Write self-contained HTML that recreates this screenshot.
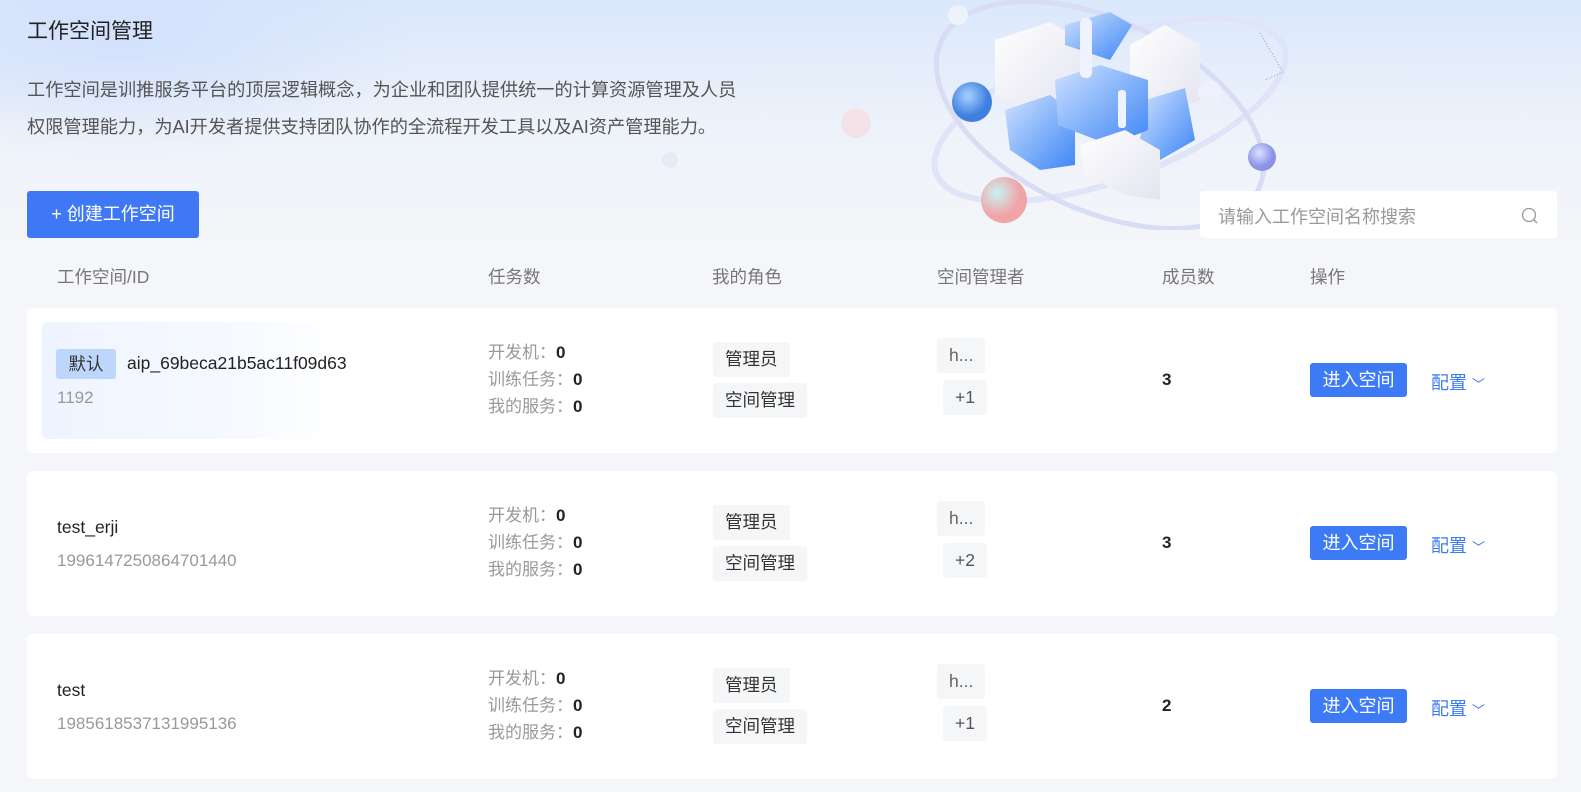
<!DOCTYPE html>
<html><head><meta charset="utf-8"><style>
*{margin:0;padding:0;box-sizing:border-box}
body{width:1581px;height:792px;overflow:hidden;background:#f5f6f9;font-family:"Liberation Sans","Noto Sans CJK SC",sans-serif;position:relative}
.bg{position:absolute;left:0;top:0;width:1581px;height:260px;background:linear-gradient(180deg,rgba(215,230,252,0.9) 0%,rgba(235,241,250,0.7) 50%,rgba(245,246,249,0) 100%)}
.bg2{position:absolute;left:0;top:0;width:1581px;height:260px;background:radial-gradient(ellipse 300px 120px at 120px 40px,rgba(205,220,252,0.7),rgba(255,255,255,0))}
.a{position:absolute;white-space:nowrap}
.card{position:absolute;left:27px;width:1530px;height:145px;background:#fff;border-radius:6px}
.hl{position:absolute;left:15px;top:14px;width:300px;height:117px;border-radius:6px;background:linear-gradient(90deg,#eef4ff,rgba(245,248,255,0.9) 60%,rgba(255,255,255,0))}
.tag{position:absolute;background:#f5f6f8;border-radius:3px;color:#333;font-size:17.5px;line-height:35px;padding:0 12px}
.t{position:absolute;font-size:17px;color:#999;line-height:27px}
.t b{color:#222}
.btn{position:absolute;left:1283px;width:97px;height:34px;background:#3d7af5;color:#fff;border-radius:3px;font-size:18px;text-align:center;line-height:34px}
.cfg{position:absolute;left:1404px;color:#3d7af5;font-size:18px}
.hd{position:absolute;top:264px;font-size:17.5px;color:#777}
</style></head><body>
<div class="bg"></div><div class="bg2"></div>
<svg class="a" style="left:900px;top:0" width="400" height="230" viewBox="900 0 400 230">
<defs>
<linearGradient id="bl" x1="0" y1="0" x2="1" y2="1"><stop offset="0" stop-color="#cfe2ff"/><stop offset="1" stop-color="#3e86f5"/></linearGradient>
<linearGradient id="wh" x1="0" y1="0" x2="1" y2="1"><stop offset="0" stop-color="#ffffff"/><stop offset="1" stop-color="#e3e4ef"/></linearGradient>
<radialGradient id="s1" cx="0.4" cy="0.35"><stop offset="0" stop-color="#a8d2ff"/><stop offset="1" stop-color="#3f7fe0"/></radialGradient>
<radialGradient id="s2" cx="0.35" cy="0.35"><stop offset="0" stop-color="#c9f3f3"/><stop offset="1" stop-color="#f1a4a8"/></radialGradient>
<radialGradient id="s3" cx="0.4" cy="0.35"><stop offset="0" stop-color="#dfe2ff"/><stop offset="1" stop-color="#8b93e6"/></radialGradient>
</defs>
<ellipse cx="1110" cy="110" rx="185" ry="70" transform="rotate(-20 1110 110)" fill="none" stroke="#e0e4f8" stroke-width="6"/>
<ellipse cx="1100" cy="115" rx="175" ry="95" transform="rotate(25 1100 115)" fill="none" stroke="#d8dcf5" stroke-width="5"/>
<polygon points="995,40 1050,22 1080,40 1080,95 1030,110 995,95" fill="url(#wh)"/>
<polygon points="1130,45 1165,25 1200,45 1200,100 1165,115 1130,95" fill="url(#wh)"/>
<polygon points="1005,110 1050,95 1075,115 1075,165 1040,170 1010,150" fill="url(#bl)"/>
<polygon points="1145,100 1185,88 1195,140 1160,160 1140,140" fill="url(#bl)"/>
<polygon points="1065,25 1110,12 1132,25 1110,60 1065,45" fill="url(#bl)"/>
<polygon points="1055,80 1100,65 1148,80 1148,130 1110,145 1058,125" fill="url(#bl)"/>
<polygon points="1080,145 1125,130 1160,150 1160,200 1125,195 1085,175" fill="url(#wh)"/>
<rect x="1080" y="18" width="12" height="60" rx="5" fill="#eef3ff"/>
<rect x="1118" y="90" width="8" height="38" rx="3" fill="#eef3ff"/>
<circle cx="972" cy="102" r="20" fill="url(#s1)"/>
<circle cx="1004" cy="200" r="23" fill="url(#s2)"/>
<circle cx="1262" cy="157" r="14" fill="url(#s3)"/>
<circle cx="1210" cy="92" r="12" fill="#eef0fb"/>
<circle cx="958" cy="15" r="10" fill="#eef2fb"/>
<polyline points="1260,33 1283,72 1265,80" fill="none" stroke="#99a" stroke-width="1" stroke-dasharray="1 2"/>
</svg>
<svg class="a" style="left:840px;top:105px" width="40" height="40"><circle cx="16" cy="18" r="15" fill="#f3e3e8"/></svg>
<svg class="a" style="left:660px;top:150px" width="20" height="20"><circle cx="10" cy="10" r="8" fill="#e6eaf5"/></svg>
<div class="a" style="left:27px;top:15px;font-size:21px;color:#222">工作空间管理</div>
<div class="a" style="left:27px;top:72px;font-size:18.2px;color:#555;line-height:37px">工作空间是训推服务平台的顶层逻辑概念，为企业和团队提供统一的计算资源管理及人员<br>权限管理能力，为AI开发者提供支持团队协作的全流程开发工具以及AI资产管理能力。</div>
<div class="a" style="left:27px;top:191px;width:172px;height:47px;background:#3f78f5;border-radius:3px;color:#fff;font-size:18px;line-height:47px;text-align:center">+ 创建工作空间</div>
<div class="a" style="left:1200px;top:191px;width:357px;height:47px;background:#fff;border-radius:4px">
<span class="a" style="left:18px;top:12px;font-size:18px;color:#999">请输入工作空间名称搜索</span>
<svg class="a" style="left:321px;top:16px" width="18" height="18"><circle cx="8" cy="8" r="6.5" fill="none" stroke="#999" stroke-width="1.3"/><line x1="12.5" y1="12.5" x2="16" y2="16" stroke="#999" stroke-width="1.3"/></svg>
</div>
<div class="hd" style="left:57px">工作空间/ID</div>
<div class="hd" style="left:488px">任务数</div>
<div class="hd" style="left:712px">我的角色</div>
<div class="hd" style="left:937px">空间管理者</div>
<div class="hd" style="left:1162px">成员数</div>
<div class="hd" style="left:1310px">操作</div>

<div class="card" style="top:308px"><div class="hl"></div>
<div class="a" style="left:29px;top:41px;width:60px;height:30px;background:#bdd6fb;border-radius:3px;font-size:17.5px;color:#333;text-align:center;line-height:30px">默认</div>
<div class="a" style="left:100px;top:45px;font-size:17.5px;color:#222">aip_69beca21b5ac11f09d63</div>
<div class="a" style="left:30px;top:80px;font-size:17px;color:#999">1192</div>
<div class="t" style="left:461px;top:31px">开发机：<b>0</b><br>训练任务：<b>0</b><br>我的服务：<b>0</b></div>
<div class="tag" style="left:686px;top:34px">管理员</div><div class="tag" style="left:686px;top:75px">空间管理</div>
<div class="tag" style="left:910px;top:30px;color:#666">h...</div><div class="tag" style="left:916px;top:72px;color:#555">+1</div>
<div class="a" style="left:1135px;top:62px;font-size:17px;font-weight:bold;color:#222">3</div>
<div class="btn" style="top:55px">进入空间</div>
<div class="cfg" style="top:61px">配置 <span style="font-size:13px">﹀</span></div>
</div>

<div class="card" style="top:471px">
<div class="a" style="left:30px;top:46px;font-size:17.5px;color:#222">test_erji</div>
<div class="a" style="left:30px;top:80px;font-size:17px;color:#999">1996147250864701440</div>
<div class="t" style="left:461px;top:31px">开发机：<b>0</b><br>训练任务：<b>0</b><br>我的服务：<b>0</b></div>
<div class="tag" style="left:686px;top:34px">管理员</div><div class="tag" style="left:686px;top:75px">空间管理</div>
<div class="tag" style="left:910px;top:30px;color:#666">h...</div><div class="tag" style="left:916px;top:72px;color:#555">+2</div>
<div class="a" style="left:1135px;top:62px;font-size:17px;font-weight:bold;color:#222">3</div>
<div class="btn" style="top:55px">进入空间</div>
<div class="cfg" style="top:61px">配置 <span style="font-size:13px">﹀</span></div>
</div>

<div class="card" style="top:634px">
<div class="a" style="left:30px;top:46px;font-size:17.5px;color:#222">test</div>
<div class="a" style="left:30px;top:80px;font-size:17px;color:#999">1985618537131995136</div>
<div class="t" style="left:461px;top:31px">开发机：<b>0</b><br>训练任务：<b>0</b><br>我的服务：<b>0</b></div>
<div class="tag" style="left:686px;top:34px">管理员</div><div class="tag" style="left:686px;top:75px">空间管理</div>
<div class="tag" style="left:910px;top:30px;color:#666">h...</div><div class="tag" style="left:916px;top:72px;color:#555">+1</div>
<div class="a" style="left:1135px;top:62px;font-size:17px;font-weight:bold;color:#222">2</div>
<div class="btn" style="top:55px">进入空间</div>
<div class="cfg" style="top:61px">配置 <span style="font-size:13px">﹀</span></div>
</div>
</body></html>
